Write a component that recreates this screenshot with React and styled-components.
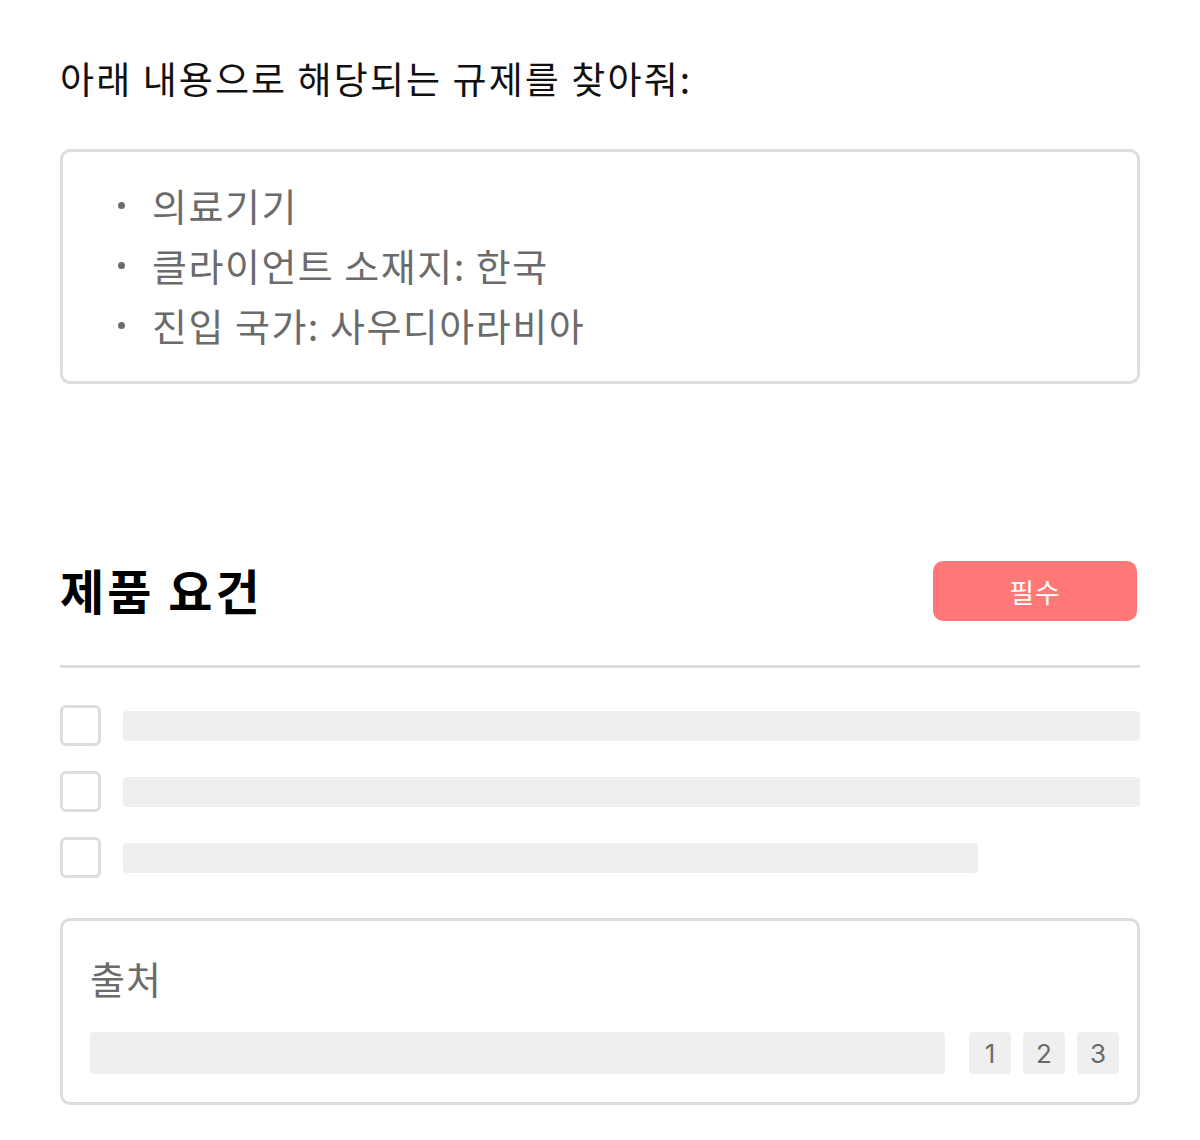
import React from "react";
import styled, { createGlobalStyle } from "styled-components";

const Global = createGlobalStyle`
  html, body { margin: 0; padding: 0; background: #fff; }
  body { font-family: "Noto Sans CJK KR", "Noto Sans", sans-serif; }
  * { box-sizing: border-box; }
`;

const Page = styled.div`
  width: 1200px;
  padding: 51px 60px 36px;
  display: flex;
  flex-direction: column;
`;

const Prompt = styled.p`
  margin: 0;
  font-size: 37px;
  line-height: 54px;
  color: #111;
  font-weight: 400;
  letter-spacing: 2.1px;
`;

const Card = styled.div`
  border: 3px solid #dddddd;
  border-radius: 10px;
  margin-top: ${(p) => p.$mt}px;
`;

const List = styled.ul`
  list-style: none;
  margin: 0;
  padding: 23px 0 26px 55px;
`;

const Item = styled.li`
  display: flex;
  align-items: center;
  gap: 27px;
  font-size: 38px;
  line-height: 60px;
  color: #6b6b6b;
  letter-spacing: 1.5px;
`;

const Dot = styled.span`
  width: 7px;
  height: 7px;
  border-radius: 50%;
  background: #6b6b6b;
  flex: none;
`;

const Header = styled.div`
  margin-top: 177px;
  display: flex;
  align-items: center;
  justify-content: space-between;
  height: 60px;
`;

const Title = styled.h2`
  margin: 0 0 4px;
  font-size: 48px;
  font-weight: 700;
  color: #000;
  letter-spacing: 3px;
`;

const Badge = styled.button`
  width: 204px;
  height: 60px;
  margin-right: 3px;
  border: none;
  border-radius: 10px;
  background: #ff7878;
  color: #fff;
  font-family: inherit;
  font-size: 27px;
  letter-spacing: 1px;
`;

const Divider = styled.hr`
  margin: 44px 0 0;
  border: none;
  height: 3px;
  background: #dddddd;
`;

const Checks = styled.div`
  margin-top: 37px;
  display: flex;
  flex-direction: column;
  gap: 25px;
`;

const Row = styled.div`
  display: flex;
  align-items: center;
  gap: 22px;
`;

const Box = styled.span`
  width: 41px;
  height: 41px;
  border: 3px solid #dddddd;
  border-radius: 6px;
  flex: none;
`;

const Bar = styled.div`
  height: ${(p) => p.$h || 30}px;
  border-radius: 4px;
  background: #efefef;
  flex: ${(p) => (p.$w ? "none" : "1")};
  width: ${(p) => (p.$w ? p.$w + "px" : "auto")};
`;

const Sources = styled.div`
  padding: 28px 18px 28px 27px;
  display: flex;
  flex-direction: column;
  gap: 26px;
`;

const SourceTitle = styled.div`
  font-size: 38px;
  line-height: 57px;
  color: #6b6b6b;
  letter-spacing: 1px;
`;

const SourceRow = styled.div`
  display: flex;
  align-items: center;
  gap: 12px;
`;

const Num = styled.span`
  width: 42px;
  height: 42px;
  border-radius: 4px;
  background: #efefef;
  color: #6b6b6b;
  font-size: 26px;
  display: flex;
  align-items: center;
  justify-content: center;
  flex: none;
  font-family: "Inter", "Noto Sans", sans-serif;
  &:first-of-type { margin-left: 12px; }
`;

export default function App() {
  return (
    <Page>
      <Global />
      <Prompt>아래 내용으로 해당되는 규제를 찾아줘:</Prompt>
      <Card $mt={44}>
        <List>
          {["의료기기", "클라이언트 소재지: 한국", "진입 국가: 사우디아라비아"].map((t) => (
            <Item key={t}>
              <Dot />
              {t}
            </Item>
          ))}
        </List>
      </Card>
      <Header>
        <Title>제품 요건</Title>
        <Badge>필수</Badge>
      </Header>
      <Divider />
      <Checks>
        <Row><Box /><Bar /></Row>
        <Row><Box /><Bar /></Row>
        <Row><Box /><Bar $w={855} /></Row>
      </Checks>
      <Card $mt={40}>
        <Sources>
          <SourceTitle>출처</SourceTitle>
          <SourceRow>
            <Bar $h={42} />
            <Num>1</Num>
            <Num>2</Num>
            <Num>3</Num>
          </SourceRow>
        </Sources>
      </Card>
    </Page>
  );
}
